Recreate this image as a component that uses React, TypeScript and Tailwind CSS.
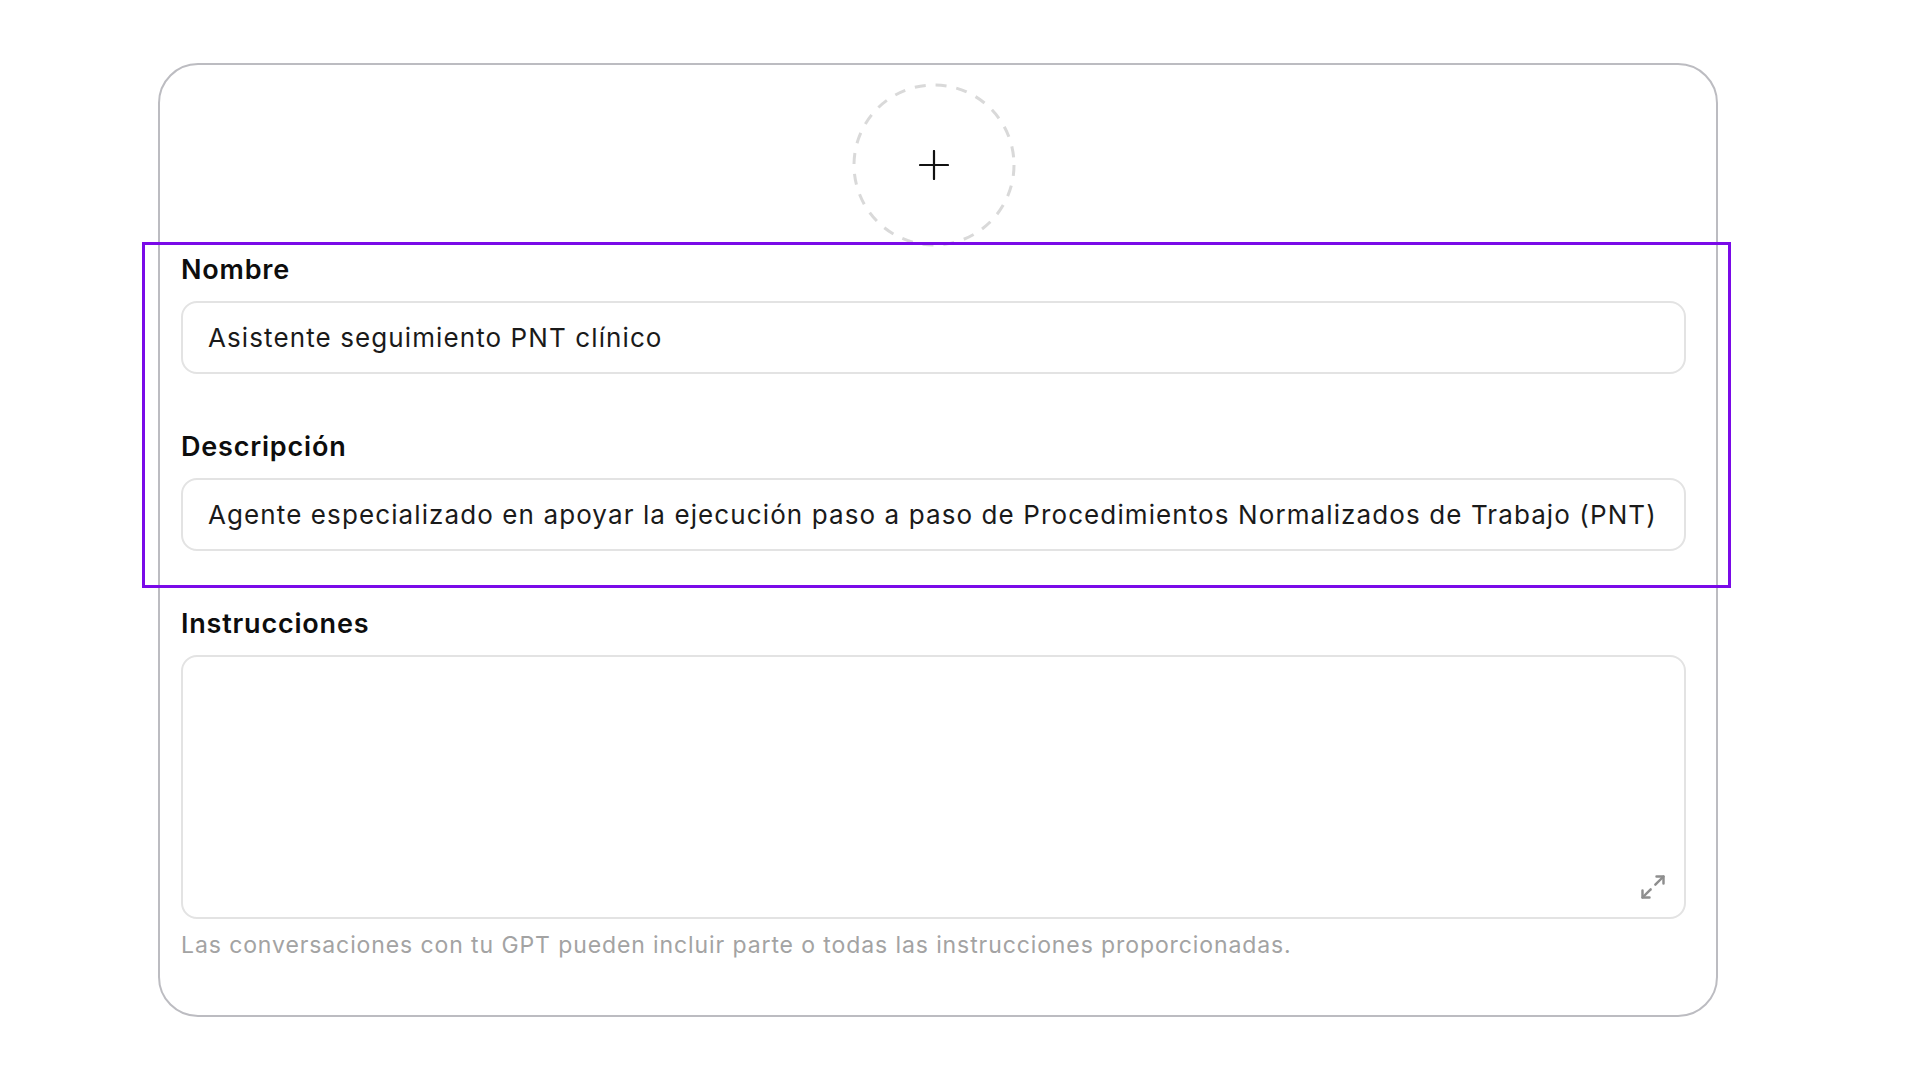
import { Maximize2 } from "lucide-react";

// Editor card of a custom GPT: avatar slot, name, description and instructions.
function Field({ label, value }: { label: string; value: string }) {
  return (
    <div className="flex flex-col gap-[15px]">
      <label className="text-[27px] font-semibold leading-[32px] tracking-[0.8px] text-[#0d0d0d]">{label}</label>
      <div className="flex h-[73px] items-center rounded-[16px] border-2 border-[#e3e3e3] bg-white pl-[25px] pr-4">
        <span className="truncate text-[26px] leading-[32px] tracking-[1.1px] text-[#1a1a1a]">{value}</span>
      </div>
    </div>
  );
}

export default function App() {
  return (
    <div className="relative h-[1080px] w-[1920px] overflow-hidden bg-white font-['Inter','Liberation_Sans',sans-serif]">
      <div className="ml-[158px] mt-[63px] flex h-[954px] w-[1560px] flex-col rounded-[40px] border-2 border-[#bcbcc1] pb-[57px] pl-[21px] pr-[30px] pt-[18px]">
        <div className="flex justify-center">
          <button className="relative flex h-[164px] w-[164px] items-center justify-center">
            <svg className="absolute inset-0" width="164" height="164" viewBox="0 0 164 164">
              <circle
                cx="82"
                cy="82"
                r="80"
                fill="none"
                stroke="#d9d9d9"
                strokeWidth="3"
                strokeDasharray="11 10"
              />
            </svg>
            <svg width="30" height="30" viewBox="0 0 30 30" className="relative">
              <path d="M15 1v28M1 15h28" stroke="#111" strokeWidth="2.2" strokeLinecap="round" />
            </svg>
          </button>
        </div>

        <div className="mt-[7px] flex flex-col gap-[57px]">
          <Field label="Nombre" value="Asistente seguimiento PNT clínico" />
          <Field
            label="Descripción"
            value="Agente especializado en apoyar la ejecución paso a paso de Procedimientos Normalizados de Trabajo (PNT)"
          />
          <div className="flex flex-col">
            <label className="text-[27px] font-semibold leading-[32px] tracking-[0.8px] text-[#0d0d0d]">
              Instrucciones
            </label>
            <div className="relative mt-[15px] h-[264px] rounded-[16px] border-2 border-[#e3e3e3] bg-white">
              <Maximize2
                size={28}
                strokeWidth={2.1}
                className="absolute bottom-[16px] right-[17px] text-[#8e8e8e]"
              />
            </div>
            <p className="mt-[12px] text-[23px] leading-[28px] tracking-[0.9px] text-[#a3a3a3]">
              Las conversaciones con tu GPT pueden incluir parte o todas las instrucciones proporcionadas.
            </p>
          </div>
        </div>
      </div>

      {/* highlight annotation drawn over the name/description block */}
      <div className="pointer-events-none absolute left-[142px] top-[242px] h-[346px] w-[1589px] border-[3px] border-[#7a0ae8]" />
    </div>
  );
}
